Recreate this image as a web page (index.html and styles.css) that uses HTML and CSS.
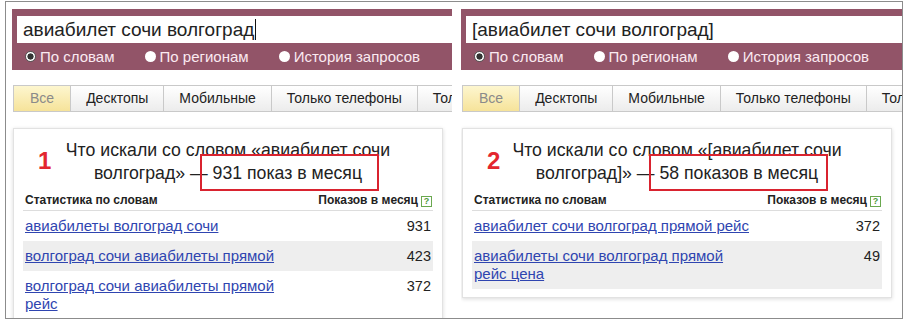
FILE: index.html
```html
<!DOCTYPE html>
<html lang="ru">
<head>
  <meta charset="UTF-8" />
  <title>Wordstat</title>
  <link rel="stylesheet" href="styles.css">
</head>
<body>
  <div class="frame">
    <div class="screen screen-left">
      <div class="search-head">
        <div class="query">авиабилет сочи волгоград<span class="caret"></span></div>
        <div class="modes">
          <span class="mode"><i class="radio checked"></i>По словам</span>
          <span class="mode"><i class="radio"></i>По регионам</span>
          <span class="mode"><i class="radio"></i>История запросов</span>
        </div>
      </div>
      <div class="tabs">
        <span class="tab active">Все</span>
        <span class="tab">Десктопы</span>
        <span class="tab">Мобильные</span>
        <span class="tab">Только телефоны</span>
        <span class="tab">Только планшеты</span>
      </div>
      <div class="card">
        <span class="mark">1</span>
        <span class="hl"></span>
        <div class="title">Что искали со словом «авиабилет сочи волгоград» — 931 показ в месяц</div>
        <div class="stats">
          <div class="stats-head">
            <span>Статистика по словам</span>
            <span>Показов в месяц<i class="help">?</i></span>
          </div>
          <div class="row"><a href="#">авиабилеты волгоград сочи</a><span class="num">931</span></div>
          <div class="row"><a href="#">волгоград сочи авиабилеты прямой</a><span class="num">423</span></div>
          <div class="row"><a href="#">волгоград сочи авиабилеты прямой рейс</a><span class="num">372</span></div>
        </div>
      </div>
    </div>

    <div class="screen screen-right">
      <div class="search-head">
        <div class="query">[авиабилет сочи волгоград]</div>
        <div class="modes">
          <span class="mode"><i class="radio checked"></i>По словам</span>
          <span class="mode"><i class="radio"></i>По регионам</span>
          <span class="mode"><i class="radio"></i>История запросов</span>
        </div>
      </div>
      <div class="tabs">
        <span class="tab active">Все</span>
        <span class="tab">Десктопы</span>
        <span class="tab">Мобильные</span>
        <span class="tab">Только телефоны</span>
        <span class="tab">Только планшеты</span>
      </div>
      <div class="card">
        <span class="mark">2</span>
        <span class="hl"></span>
        <div class="title">Что искали со словом «[авиабилет сочи волгоград]» — 58 показов в месяц</div>
        <div class="stats">
          <div class="stats-head">
            <span>Статистика по словам</span>
            <span>Показов в месяц<i class="help">?</i></span>
          </div>
          <div class="row"><a href="#">авиабилет сочи волгоград прямой рейс</a><span class="num">372</span></div>
          <div class="row"><a href="#">авиабилеты сочи волгоград прямой рейс цена</a><span class="num">49</span></div>
        </div>
      </div>
    </div>
  </div>
</body>
</html>
```

FILE: styles.css
```css
body {
  margin: 0;
  background: #fff;
  font-family: Arial, "Liberation Sans", sans-serif;
  color: #222;
}
.frame {
  margin: 1px 0 0 5px;
  width: 896px;
  height: 316px;
  border: 1px solid #8c8c8c;
  display: flex;
  gap: 9px;
  overflow: hidden;
}
.screen {
  overflow: hidden;
  height: 316px;
}
.screen-left {
  width: 440px;
  padding-left: 6px;
}
.screen-right {
  width: 441px;
}
.search-head {
  margin-top: 7px;
  height: 61px;
  background: #925468;
  padding-top: 7px;
  box-sizing: border-box;
}
.query {
  margin-left: 5px;
  height: 27px;
  background: #fff;
  font-size: 19px;
  line-height: 27px;
  padding-left: 6px;
  white-space: nowrap;
  color: #222;
}
.caret {
  display: inline-block;
  width: 1px;
  height: 21px;
  background: #111;
  vertical-align: -4px;
  margin-left: 1px;
}
.modes {
  display: flex;
  gap: 30px;
  padding-left: 13px;
  height: 27px;
  align-items: center;
  white-space: nowrap;
}
.mode {
  display: flex;
  align-items: center;
  color: #fbeaf1;
  font-size: 15px;
}
.radio {
  display: inline-block;
  width: 11px;
  height: 11px;
  border-radius: 50%;
  background: #fff;
  margin-right: 4px;
}
.radio.checked {
  width: 9px;
  height: 9px;
  border: 1px solid #555;
  background: radial-gradient(circle, #333 0 2.8px, #fff 3.4px);
}
.tabs {
  display: flex;
  margin: 15px 0 0 1px;
  white-space: nowrap;
}
.tab {
  flex-shrink: 0;
  height: 25px;
  line-height: 25px;
  padding: 0 15px;
  font-size: 14px;
  border: 1px solid #c9c9c9;
  border-left: none;
  background: linear-gradient(#fff, #ececec);
}
.tab:first-child {
  border-left: 1px solid #c9c9c9;
  padding: 0 16px;
}
.tab.active {
  color: #8a8a8a;
  background: linear-gradient(#fdf6cf, #f6e39a);
}
.card {
  position: relative;
  margin: 16px 0 0 1px;
  width: 430px;
  box-sizing: border-box;
  border: 1px solid #e2e2e2;
  box-shadow: 0 1px 4px rgba(0, 0, 0, 0.15);
  padding: 10px 9px 8px;
  background: #fff;
}
.title {
  padding: 0 35px;
  text-align: center;
  font-size: 17.7px;
  line-height: 23px;
  color: #222;
}
.mark {
  position: absolute;
  left: 24px;
  top: 18px;
  font-size: 24px;
  font-weight: bold;
  color: #e3262f;
}
.hl {
  position: absolute;
  left: 186px;
  top: 25px;
  width: 175px;
  height: 33px;
  border: 2.5px solid #d9232f;
}
.stats {
  margin-top: 5px;
}
.stats-head {
  display: flex;
  justify-content: space-between;
  align-items: center;
  height: 20px;
  padding: 0 1px 0 2px;
  font-size: 12px;
  font-weight: bold;
  border-bottom: 1px solid #ddd;
}
.help {
  display: inline-block;
  width: 9px;
  height: 9px;
  margin-left: 3px;
  border: 1px solid #6aa84f;
  color: #4f9a3a;
  font-size: 9px;
  line-height: 9px;
  text-align: center;
  font-style: normal;
}
.row {
  display: flex;
  justify-content: space-between;
  align-items: flex-start;
  padding: 6px 2px;
  line-height: 18px;
}
.row:nth-child(odd) {
  background: #eee;
}
.row a {
  width: 278px;
  font-size: 15px;
  color: #2f45b0;
  text-decoration: underline;
}
.num {
  font-size: 14.5px;
  color: #222;
}
```
